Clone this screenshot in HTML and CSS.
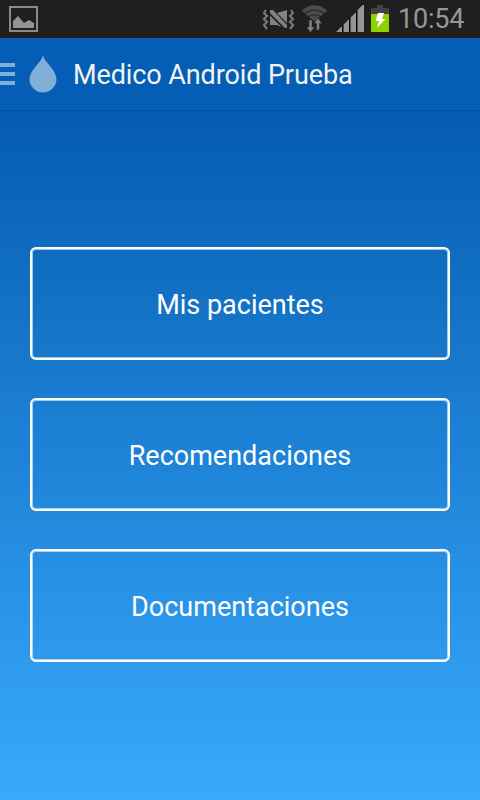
FILE: index.html
```html
<!DOCTYPE html>
<html lang="es">
	<head>
		<title>Medico Android Prueba</title>
		<meta charset="UTF-8">
		<meta name="viewport" content="width=device-width, initial-scale=1">
		<link rel="stylesheet" href="styles.css">
	</head>
	<body>
		<div id="status">
			<svg class="picture" width="30" height="28" viewBox="0 0 30 28">
				<path d="M1 1h27v24H1z" fill="none" stroke="#8a8a8a" stroke-width="2"/>
				<path d="M4 22v-7l5-5 6 7 5-3 5 3v5z" fill="#929292"/>
			</svg>
			<div class="icons">
				<svg width="34" height="24" viewBox="0 0 34 24">
					<path d="M4 2L2 5l3 3-3 3 3 3-3 3 3 4M29 2l2 3-3 3 3 3-3 3 3 3-3 4" fill="none" stroke="#777" stroke-width="2.200"/>
					<path d="M8 2h3l14 15v3h-2L8 5zM15 5l10-3v13zM8 7.500L19.500 19 15 17H8z" fill="#828282"/>
				</svg>
				<svg width="28" height="28" viewBox="0 0 28 28">
					<path d="M.5 5.500q13-10.500 26 0l-13 11z" fill="#4b4b4b"/>
					<path d="M3.500 8.500q10-7 20 0M7 11.800q6.500-4 13 0" fill="none" stroke="#1f1f1f" stroke-width="1"/>
					<path d="M8 15h3v7h2.500l-4 5.500-4-5.500H8zM15.500 25v-6.500H13l4-5.500 4 5.500h-2.500V25z" fill="#7e7e7e" stroke="#1f1f1f" stroke-width=".4"/>
				</svg>
				<svg class="signal" width="29" height="28" viewBox="0 0 29 28">
					<path d="M0 27L26 0h2v27z" fill="#000"/>
					<path d="M0 27l6-6v6zM7.500 19.500l5.500-5.500v13H7.500zM14.500 12.500L20 7v20h-5.500zM21.500 5l5-5H28v27h-6.500z" fill="#959595"/>
				</svg>
				<svg class="battery" width="18" height="27" viewBox="0 0 18 27">
					<path d="M0 3h6V0h6v3h6v7H0z" fill="#424242"/>
					<path d="M0 9h18v18H0z" fill="#8fd000"/>
					<path d="M7 8h6l-2 6h3.500L6 23l2-7H4.500z" fill="#fff"/>
				</svg>
			</div>
			<span class="clock">10:54</span>
		</div>
		<div id="bar">
			<svg class="menu" width="15" height="22" viewBox="0 0 15 22">
				<path d="M0 0h15v4H0zM0 9h15v4H0zM0 18h15v4H0z" fill="#82aeda"/>
			</svg>
			<svg class="drop" width="28" height="38" viewBox="0 0 28 38">
				<path d="M14 0C15 7 27.500 15 27.500 24A13.500 13.500 0 0 1 .5 24C.5 15 13 7 14 0z" fill="#82aeda"/>
			</svg>
			<span class="title">Medico Android Prueba</span>
		</div>
		<div id="page">
			<button type="button">Mis pacientes</button>
			<button type="button">Recomendaciones</button>
			<button type="button">Documentaciones</button>
		</div>
	</body>
</html>
```

FILE: styles.css
```css
html, body {
	margin: 0;
	padding: 0;
	font-family: Roboto, sans-serif;
}

* {
	box-sizing: border-box;
}

body {
	display: flex;
	flex-direction: column;
	height: 100vh;
	overflow: hidden;
}

#status {
	display: flex;
	height: 38px;
	padding: 0 15px 0 9px;
	background-color: #1f1f1f;
}

#status svg {
	flex: none;
}

#status .picture {
	margin-top: 6px;
}

.icons {
	display: flex;
	margin-left: auto;
	padding-top: 5px;
}

.icons svg:nth-child(1) {
	margin-top: 3px;
	margin-right: 5px;
}

.icons .signal {
	margin-left: 7px;
}

.icons .battery {
	margin-left: 6px;
}

.clock {
	width: 67px;
	margin-left: 9px;
	padding-right: 1px;
	color: #979797;
	font-size: 27px;
	letter-spacing: -0.2px;
	line-height: 38px;
	text-align: right;
	white-space: nowrap;
}

#bar {
	display: flex;
	align-items: center;
	height: 72px;
	background-color: #045eb5;
	color: #f3f3f3;
	font-size: 27px;
}

#bar .drop {
	margin-left: 14px;
	margin-right: 16px;
}

#bar .title {
	padding-top: 2px;
	letter-spacing: -0.1px;
}

#page {
	flex: 1;
	display: flex;
	flex-direction: column;
	gap: 38px;
	padding: 136px 30px 0;
	border-top: 1px solid #044f9a;
	background: linear-gradient(#045cb0, #38aafd);
}

#page button {
	height: 113px;
	padding: 2px 0 0;
	border: 2px solid #fff;
	border-radius: 6px;
	background: none;
	box-shadow: inset 0 0 0 1px rgba(255, 255, 255, 0.6);
	color: #fff;
	font-family: inherit;
	font-size: 27px;
}
```
